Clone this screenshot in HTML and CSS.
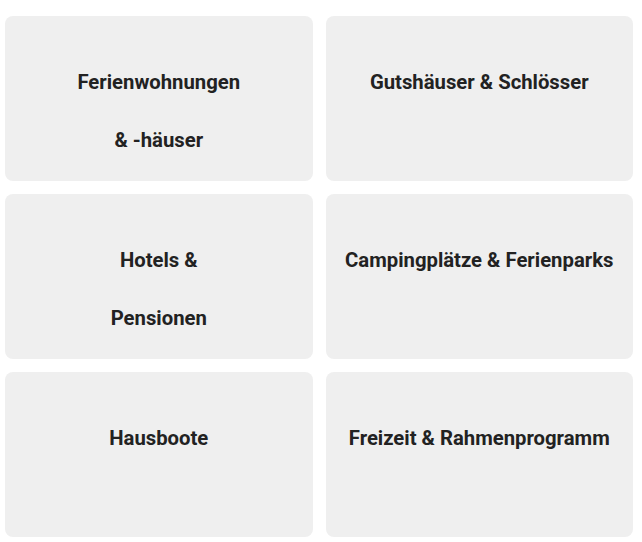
FILE: index.html
```html
<!DOCTYPE html>
<html lang="de">
  <head>
    <meta charset="UTF-8" />
    <meta name="viewport" content="width=device-width, initial-scale=1.0" />
    <title>Unterkünfte</title>
    <link rel="stylesheet" href="styles.css">
  </head>
  <body>
    <div class="tiles">
      <a class="tile" href="#">
        <p>Ferienwohnungen<br>&amp; -häuser</p>
      </a>
      <a class="tile" href="#">
        <p>Gutshäuser &amp; Schlösser</p>
      </a>
      <a class="tile" href="#">
        <p>Hotels &amp;<br>Pensionen</p>
      </a>
      <a class="tile" href="#">
        <p>Campingplätze &amp; Ferienparks</p>
      </a>
      <a class="tile" href="#">
        <p>Hausboote</p>
      </a>
      <a class="tile" href="#">
        <p>Freizeit &amp; Rahmenprogramm</p>
      </a>
    </div>
  </body>
</html>
```

FILE: styles.css
```css
* {
  margin: 0;
  padding: 0;
  box-sizing: border-box;
}

body {
  background: #ffffff;
  font-family: Roboto, "Liberation Sans", sans-serif;
  padding: 16px 9px 5px 5px;
}

.tiles {
  display: grid;
  grid-template-columns: 1fr 1fr;
  gap: 13.3px 13px;
}

.tile {
  display: block;
  height: 164.7px;
  padding-top: 37px;
  background: #efefef;
  border-radius: 8px;
  color: #222222;
  text-decoration: none;
  text-align: center;
}

.tile p {
  font-size: 20.3px;
  font-weight: 700;
  line-height: 58px;
}
```
